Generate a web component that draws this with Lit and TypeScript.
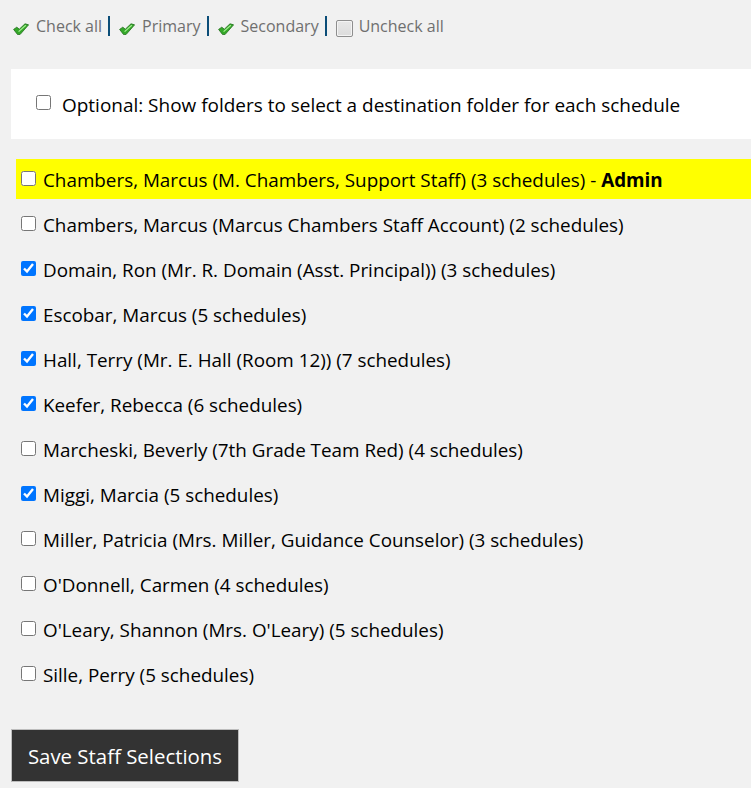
import { LitElement, html, css, svg } from "lit";
import { customElement } from "lit/decorators.js";

const staff: { t: string; c: boolean; admin?: boolean }[] = [
  { t: "Chambers, Marcus (M. Chambers, Support Staff) (3 schedules) - ", c: false, admin: true },
  { t: "Chambers, Marcus (Marcus Chambers Staff Account) (2 schedules)", c: false },
  { t: "Domain, Ron (Mr. R. Domain (Asst. Principal)) (3 schedules)", c: true },
  { t: "Escobar, Marcus (5 schedules)", c: true },
  { t: "Hall, Terry (Mr. E. Hall (Room 12)) (7 schedules)", c: true },
  { t: "Keefer, Rebecca (6 schedules)", c: true },
  { t: "Marcheski, Beverly (7th Grade Team Red) (4 schedules)", c: false },
  { t: "Miggi, Marcia (5 schedules)", c: true },
  { t: "Miller, Patricia (Mrs. Miller, Guidance Counselor) (3 schedules)", c: false },
  { t: "O'Donnell, Carmen (4 schedules)", c: false },
  { t: "O'Leary, Shannon (Mrs. O'Leary) (5 schedules)", c: false },
  { t: "Sille, Perry (5 schedules)", c: false },
];

const tick = svg`<svg class="ico" width="16" height="12" viewBox="0 0 16 12">
  <path d="M0.6 6.4 L3.8 4.2 L6.3 6.2 L12 0.8 L15.6 1.8 L7 11.6 L4.6 11.6 Z" fill="#34a828" stroke="#1f6d1a" stroke-width=".8" stroke-linejoin="round"/>
  <path d="M5.6 8.6 L12.8 2.2" stroke="#a4ee92" stroke-width="1.2"/>
</svg>`;

@customElement("app-root")
export class AppRoot extends LitElement {
  static styles = css`
    :host {
      display: block;
      width: 751px;
      height: 788px;
      overflow: hidden;
      background: #f1f1f1;
      font-family: "Open Sans", "Noto Sans", sans-serif;
      font-size: 18.85px;
      color: #000;
    }
    .links {
      display: flex;
      align-items: center;
      height: 24px;
      padding: 14px 0 0 13px;
      color: #6f6f6f;
      font-size: 16px;
    }
    .link {
      display: flex;
      align-items: center;
    }
    .ico {
      margin: 5px 7px 0 0;
      flex: none;
    }
    .box {
      width: 17px;
      height: 17px;
      margin: 4px 6px 0 0;
      box-sizing: border-box;
      border: 1px solid #8e8e8e;
      border-radius: 2px;
      background: linear-gradient(#e8e8e8, #dcdcdc);
      box-shadow: inset 0 0 0 1px #f4f4f4;
      flex: none;
    }
    .sep {
      width: 2px;
      height: 20px;
      margin: 0 9px 0 6px;
      background: #0b4d78;
    }
    .panel {
      display: flex;
      align-items: center;
      height: 70px;
      margin: 31px 0 20px 11px;
      padding-left: 25px;
      background: #fff;
      font-size: 18.97px;
    }
    .panel input {
      margin: 0 11px 4px 0;
    }
    .panel span {
      padding-top: 2px;
    }
    .row {
      display: flex;
      align-items: center;
      height: 40px;
      margin: 0 0 5px 16px;
      padding-left: 5px;
    }
    .row.hl {
      background: #ffff00;
    }
    .row input {
      margin: 0 7px 2px 0;
      flex: none;
    }
    input {
      width: 15px;
      height: 15px;
    }
    b {
      font-weight: 700;
    }
    .txt {
      white-space: pre;
      padding-top: 2px;
    }
    .save {
      display: block;
      width: 228px;
      height: 53px;
      margin: 35px 0 0 11px;
      padding: 0;
      box-sizing: border-box;
      background: #333;
      border: 1px solid #bdbdbd;
      color: #fff;
      font: inherit;
      font-size: 20.4px;
    }
  `;

  render() {
    return html`
      <div class="links">
        <span class="link">${tick}Check all</span><span class="sep"></span>
        <span class="link">${tick}Primary</span><span class="sep"></span>
        <span class="link">${tick}Secondary</span><span class="sep"></span>
        <span class="link"><span class="box"></span>Uncheck all</span>
      </div>
      <div class="panel">
        <input type="checkbox" /><span>Optional: Show folders to select a destination folder for each schedule</span>
      </div>
      ${staff.map(
        (s) => html`<div class="row ${s.admin ? "hl" : ""}">
          <input type="checkbox" .checked=${s.c} /><span class="txt">${s.t}${s.admin ? html`<b>Admin</b>` : ""}</span>
        </div>`
      )}
      <button class="save">Save Staff Selections</button>
    `;
  }
}
